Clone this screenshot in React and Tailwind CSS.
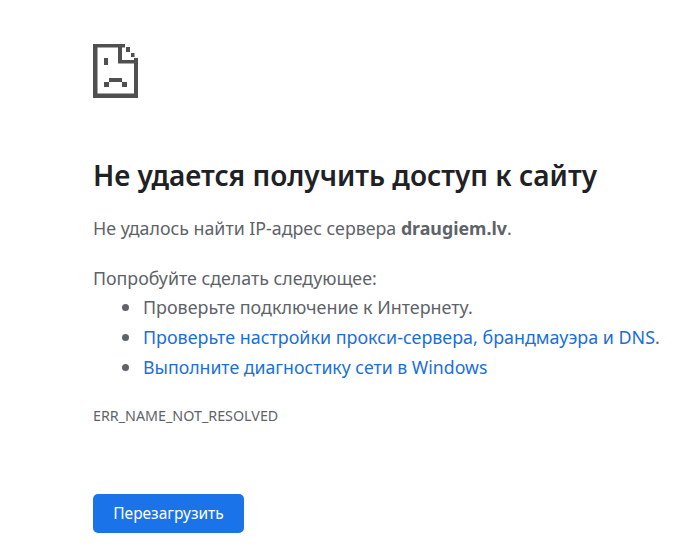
import React from 'react';

const SadTab = () => (
    <svg width="45" height="55" viewBox="0 0 45 55" className="block" fill="#505050">
        <path d="M0 1h32v3.500h-27.500v46h36.500v-35.500h4v40h-45z" />
        <path d="M25 4h4v13h16v3.500h-20z" />
        <path d="M33 4h4v5h-4zM38 10h3.500v4h-3.500z" />
        <path d="M11 15h4v7h-4z" />
        <path d="M16 35h13v4h-13zM11 39h5v5h-5zM29 39h5v5h-5z" />
    </svg>
);

const App = () => {
    return (
        <div className="min-h-screen bg-white font-['Noto_Sans',sans-serif] text-[#5f6368] pl-[93px] pr-2 pt-[43px]">
            <SadTab />

            <h1 className="mt-[59px] text-[28px] leading-[36px] font-semibold text-[#202124] whitespace-nowrap">
                Не удается получить доступ к сайту
            </h1>

            <p className="mt-[23px] text-[17.8px] leading-[24px] whitespace-nowrap">
                Не удалось найти IP-адрес сервера <b>draugiem.lv</b>.
            </p>

            <p className="mt-[26px] text-[17.8px] leading-[24px]">Попробуйте сделать следующее:</p>
            <ul className="mt-[1px] pl-[50px] text-[17.9px] leading-[30px] list-disc whitespace-nowrap marker:text-[21px] marker:text-[#5f6368]">
                <li className="h-[30px]">Проверьте подключение к Интернету.</li>
                <li className="h-[30px]">
                    <span className="text-[#1b6fd8]">Проверьте настройки прокси-сервера, брандмауэра и DNS</span>.
                </li>
                <li className="h-[30px]"><span className="text-[#1b6fd8] text-[17.7px]">Выполните диагностику сети в Windows</span></li>
            </ul>

            <p className="mt-[25px] text-[14.3px] leading-[20px]">ERR_NAME_NOT_RESOLVED</p>

            <button className="mt-[68px] h-[39px] w-[151px] rounded-[5px] bg-[#1a73e8] text-[15.5px] text-white">
                Перезагрузить
            </button>
        </div>
    );
};

export default App;
